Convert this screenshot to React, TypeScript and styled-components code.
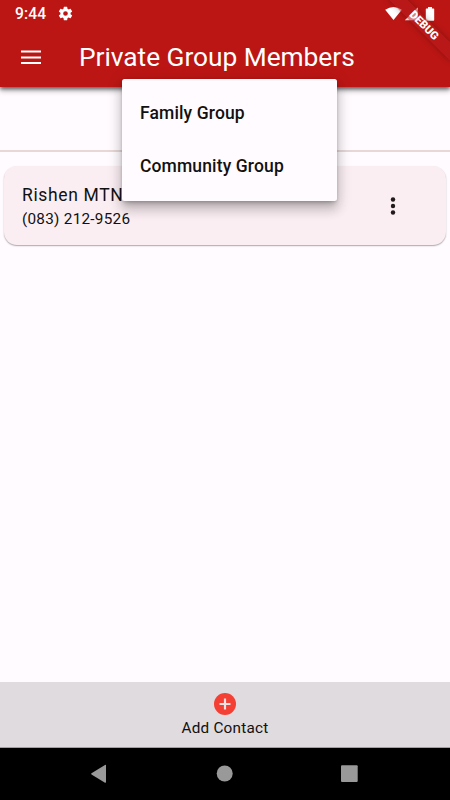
import React from "react";
import styled, { createGlobalStyle } from "styled-components";

const GlobalStyle = createGlobalStyle`
  * { box-sizing: border-box; }
  body { margin: 0; background: #fffbff; }
`;

const Screen = styled.div`
  position: relative;
  display: flex;
  flex-direction: column;
  width: 450px;
  height: 800px;
  overflow: hidden;
  background: #fffbff;
  color: #111;
  font-family: Roboto, sans-serif;
  white-space: nowrap;
`;

const Header = styled.header`
  position: relative;
  flex: 0 0 87px;
  background: #bb1614;
  color: #fff;
  box-shadow: 0 2px 4px rgba(0, 0, 0, 0.55), 0 4px 6px rgba(0, 0, 0, 0.2);
`;

const StatusBar = styled.div`
  display: flex;
  align-items: center;
  height: 27px;
  padding: 0 14px 0 15px;
`;

const Clock = styled.span`
  width: 42px;
  padding-top: 2px;
  font-size: 15.6px;
  font-weight: 500;
  line-height: 27px;
  letter-spacing: 0.1px;
`;

const StatusIcons = styled.div`
  display: flex;
  margin-left: auto;
`;

const TitleBar = styled.div`
  display: flex;
  align-items: center;
  height: 60px;
  padding-left: 17px;
`;

const Title = styled.h1`
  margin: 0 0 0 35px;
  font-size: 26.3px;
  font-weight: 400;
  line-height: 60px;
  letter-spacing: -0.03px;
`;

const DebugBanner = styled.div`
  position: absolute;
  z-index: 5;
  left: 380px;
  top: 19px;
  width: 88px;
  height: 13px;
  transform: rotate(45deg);
  background: rgba(183, 28, 28, 0.55);
  box-shadow: 0 0 6px rgba(0, 0, 0, 0.25);
  color: #fff;
  font-size: 11.2px;
  font-weight: 900;
  line-height: 13px;
  text-align: center;
`;

const FilterArea = styled.div`
  flex: 0 0 65px;
  border-bottom: 2px solid #e7d7d7;
`;

const ContactCard = styled.article`
  display: flex;
  align-items: center;
  flex: 0 0 79px;
  margin: 14px 4px 0;
  padding: 0 45px 0 18px;
  border-radius: 13px;
  background: #faeef2;
  box-shadow: 0 1px 1.5px rgba(0, 0, 0, 0.34);
`;

const ContactText = styled.div`
  flex: 1;
  padding-top: 2px;
`;

const ContactName = styled.div`
  font-size: 17.5px;
  line-height: 25px;
  letter-spacing: 0.65px;
`;

const Phone = styled.div`
  font-size: 15.3px;
  line-height: 23px;
  letter-spacing: 0.27px;
`;

const Menu = styled.div`
  position: absolute;
  z-index: 4;
  left: 122px;
  top: 79px;
  width: 215px;
  height: 122px;
  padding: 8px 18px;
  border-radius: 2.5px;
  background: #fffbff;
  box-shadow: 0 5px 6px -3px rgba(0, 0, 0, 0.2),
    0 9px 11px 1px rgba(0, 0, 0, 0.14), 0 3px 15px 2px rgba(0, 0, 0, 0.12),
    0 1px 3px rgba(0, 0, 0, 0.15);
`;

const MenuItem = styled.div`
  font-size: 17.5px;
  font-weight: 500;
  line-height: 52.5px;
  letter-spacing: 0.13px;
`;

const BottomBar = styled.footer`
  display: flex;
  flex: 0 0 66px;
  flex-direction: column;
  align-items: center;
  margin-top: auto;
  padding-top: 11px;
  border-bottom: 1px solid #a29ea1;
  background: #e0dbdf;
`;

const AddLabel = styled.span`
  margin-top: 2px;
  font-size: 15.3px;
  line-height: 22px;
  letter-spacing: 0.24px;
`;

const SystemNav = styled.nav`
  flex: 0 0 52px;
  background: #000;
`;

const Icon = styled.svg`
  display: block;
  flex: none;
`;

const GearIcon = () => (
  <Icon width="17" height="17" viewBox="0 0 24 24" fill="#fff">
    <path d="M19.14 12.94c.04-.3.06-.61.06-.94s-.02-.64-.07-.94l2.03-1.58a.49.49 0 0 0 .12-.61l-1.92-3.32a.49.49 0 0 0-.59-.22l-2.39.96a7 7 0 0 0-1.62-.94l-.36-2.54a.48.48 0 0 0-.48-.41h-3.84a.48.48 0 0 0-.47.41l-.36 2.54c-.59.24-1.13.57-1.62.94l-2.39-.96a.49.49 0 0 0-.59.22L2.74 8.87a.48.48 0 0 0 .12.61l2.03 1.58a7.8 7.8 0 0 0 0 1.88l-2.03 1.58a.49.49 0 0 0-.12.61l1.92 3.32c.12.22.37.29.59.22l2.39-.96c.5.38 1.03.7 1.62.94l.36 2.54c.05.24.24.41.48.41h3.84c.24 0 .44-.17.47-.41l.36-2.54a7 7 0 0 0 1.62-.94l2.39.96c.22.08.47 0 .59-.22l1.92-3.32a.48.48 0 0 0-.12-.61zM12 15.3a3.3 3.3 0 1 1 0-6.6 3.3 3.3 0 0 1 0 6.6z" />
  </Icon>
);

export default function App() {
  return (
    <>
      <GlobalStyle />
      <Screen>
        <Header>
          <StatusBar>
            <Clock>9:44</Clock>
            <GearIcon />
            <StatusIcons>
              <Icon width="51" height="16" viewBox="385 5 51 16" fill="#fff">
                <path d="M385.2 8.8Q393.5 3.2 401.8 8.8L393.5 19z" />
                <path d="M404.8 19.3 417.7 6.5v12.8z" />
                <path d="M428 6h4v1.4h1.5q.7 0 .7.7v11q0 .7-.7.7h-7q-.7 0-.7-.7v-11q0-.7.7-.7h1.5z" />
              </Icon>
            </StatusIcons>
          </StatusBar>
          <TitleBar>
            <Icon width="27" height="27" viewBox="17 43.5 27 27" fill="#fff">
              <path d="M21 50h20v2H21zM21 56h20v2H21zM21 61.5h20v2H21z" />
            </Icon>
            <Title>Private Group Members</Title>
          </TitleBar>
        </Header>
        <FilterArea />
        <ContactCard>
          <ContactText>
            <ContactName>Rishen MTN</ContactName>
            <Phone>(083) 212-9526</Phone>
          </ContactText>
          <Icon width="16" height="26" viewBox="0 0 16 26" fill="#201a1b">
            <circle cx="8" cy="6.5" r="2.2" />
            <circle cx="8" cy="13" r="2.2" />
            <circle cx="8" cy="19.5" r="2.2" />
          </Icon>
        </ContactCard>
        <BottomBar>
          <Icon width="22" height="22" viewBox="0 0 22 22">
            <circle cx="11" cy="11" r="11" fill="#f43f34" />
            <path d="M5.5 11h11M11 5.5v11" stroke="#ebe2e5" strokeWidth="2.2" />
          </Icon>
          <AddLabel>Add Contact</AddLabel>
        </BottomBar>
        <SystemNav>
          <Icon width="450" height="52" viewBox="0 0 450 52" fill="#999">
            <path d="M106 17v17q0 1-1 .7L91.5 26.4q-.8-.6 0-1.2L105 17q1-.6 1 0z" />
            <circle cx="224.7" cy="25.5" r="8" />
            <rect x="341" y="17.3" width="16.7" height="16.7" rx="1" />
          </Icon>
        </SystemNav>
        <Menu>
          <MenuItem>Family Group</MenuItem>
          <MenuItem>Community Group</MenuItem>
        </Menu>
        <DebugBanner>DEBUG</DebugBanner>
      </Screen>
    </>
  );
}
